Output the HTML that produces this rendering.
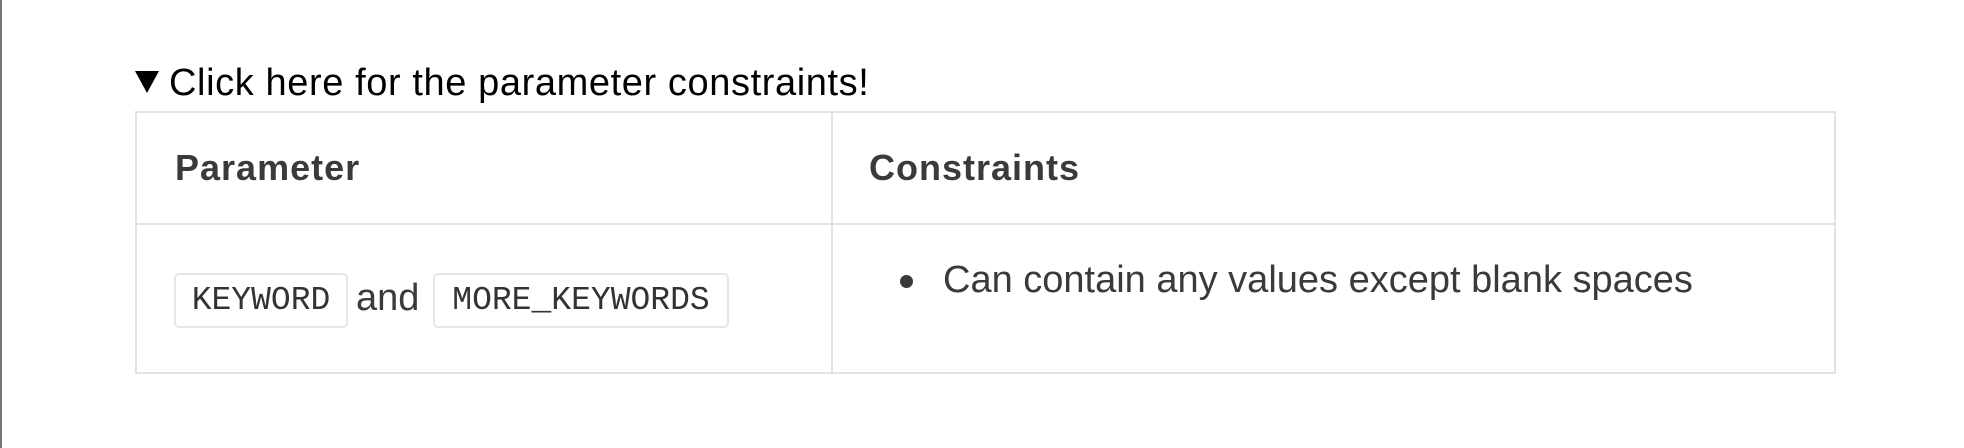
<!DOCTYPE html>
<html><head><style>
body{margin:0;width:1964px;height:448px;background:#fff;position:relative;overflow:hidden;font-family:"Liberation Sans","DejaVu Sans",sans-serif;}
.lb{position:absolute;left:0;top:0;width:2px;height:448px;background:#777;}
.t{position:absolute;white-space:nowrap;}
.sum{left:135px;top:62px;font-size:38px;color:#000;letter-spacing:0.6px;}
.tri{display:inline-block;width:0;height:0;border-left:12px solid transparent;border-right:12px solid transparent;border-top:22px solid #000;margin-right:10px;vertical-align:2px;}
.tbl{position:absolute;left:135px;top:111px;width:1697px;height:259px;border:2px solid #e2e2e2;}
.h{position:absolute;left:0;top:110px;width:1697px;height:2px;background:#e2e2e2;}
.v{position:absolute;left:694px;top:0;width:2px;height:259px;background:#e2e2e2;}
.b{font-weight:bold;font-size:36px;color:#3a3a3a;letter-spacing:1px;}
.code{position:absolute;top:273px;height:51px;border:2px solid #e6e6e6;border-radius:5px;font-family:"Liberation Mono",monospace;font-size:33px;color:#333;line-height:51px;text-align:center;}
.c{font-size:38px;color:#3a3a3a;}
.dot{position:absolute;left:900px;top:275px;width:13px;height:13px;border-radius:50%;background:#3a3a3a;}
</style></head><body>
<div class="lb"></div>
<div class="t sum"><span class="tri"></span>Click here for the parameter constraints!</div>
<div class="tbl"><div class="h"></div><div class="v"></div></div>
<div class="t b" style="left:175px;top:147px;">Parameter</div>
<div class="t b" style="left:869px;top:147px;">Constraints</div>
<div class="code" style="left:174px;width:170px;">KEYWORD</div>
<div class="t c" style="left:356px;top:277px;">and</div>
<div class="code" style="left:433px;width:292px;">MORE_KEYWORDS</div>
<div class="dot"></div>
<div class="t c" style="left:943px;top:259px;">Can contain any values except blank spaces</div>
</body></html>
